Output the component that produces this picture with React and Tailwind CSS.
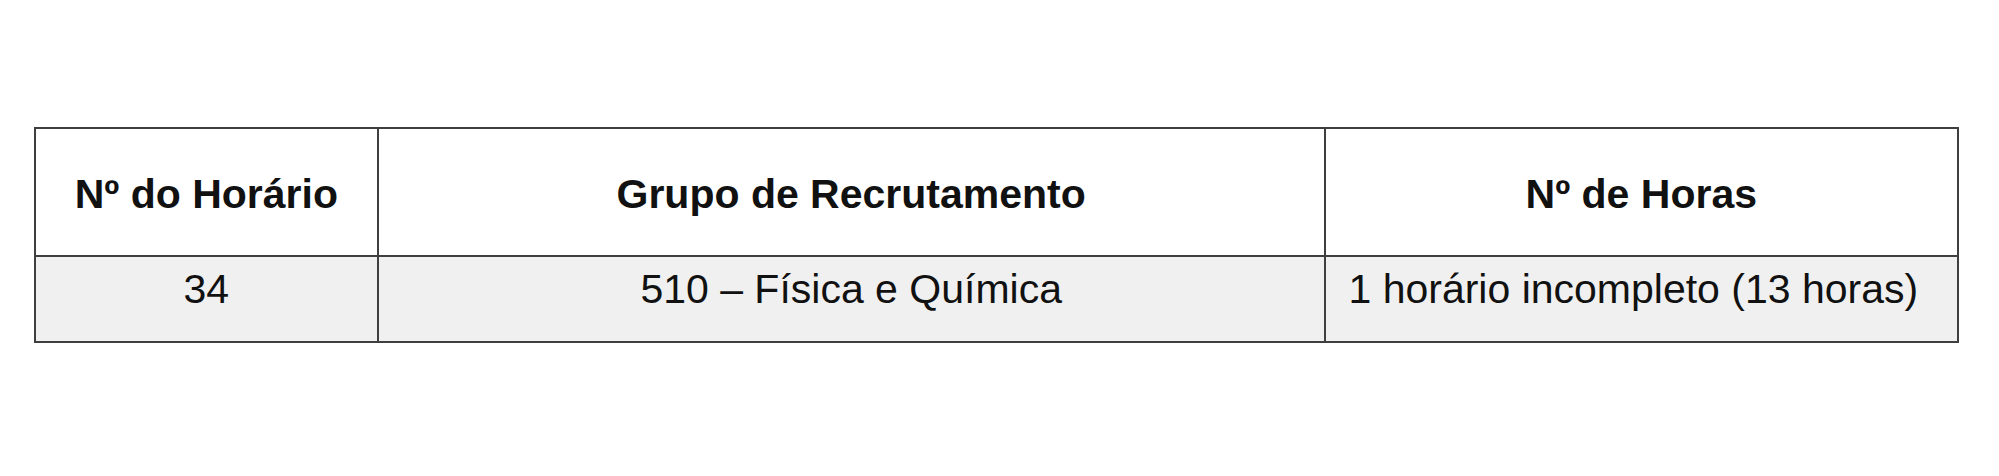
const rows = [
  { horario: "34", grupo: "510 – Física e Química", horas: "1 horário incompleto (13 horas)" },
];

export default function App() {
  return (
    <div className="min-h-[476px] w-full bg-white pt-[127px] pl-[34px] font-['Liberation_Sans',Arial,sans-serif] text-[#111]">
      <table className="w-[1925px] border-collapse border-2 border-[#3f3f3f] text-[41px] leading-[47px]">
        <colgroup>
          <col className="w-[343px]" />
          <col className="w-[948px]" />
          <col className="w-[634px]" />
        </colgroup>
        <thead>
          <tr className="h-[128px] bg-white">
            <th className="border-2 border-[#3f3f3f] pt-[5px] text-center align-middle font-bold">Nº do Horário</th>
            <th className="border-2 border-[#3f3f3f] pt-[5px] text-center align-middle font-bold">Grupo de Recrutamento</th>
            <th className="border-2 border-[#3f3f3f] pt-[5px] text-center align-middle font-bold">Nº de Horas</th>
          </tr>
        </thead>
        <tbody>
          {rows.map(function (r) {
            return (
              <tr key={r.horario} className="h-[86px] bg-[#f0f0f0]">
                <td className="border-2 border-[#3f3f3f] pt-[9px] text-center align-top">{r.horario}</td>
                <td className="border-2 border-[#3f3f3f] pt-[9px] text-center align-top">{r.grupo}</td>
                <td className="border-2 border-[#3f3f3f] pt-[9px] pr-[16px] text-center align-top">{r.horas}</td>
              </tr>
            );
          })}
        </tbody>
      </table>
    </div>
  );
}
